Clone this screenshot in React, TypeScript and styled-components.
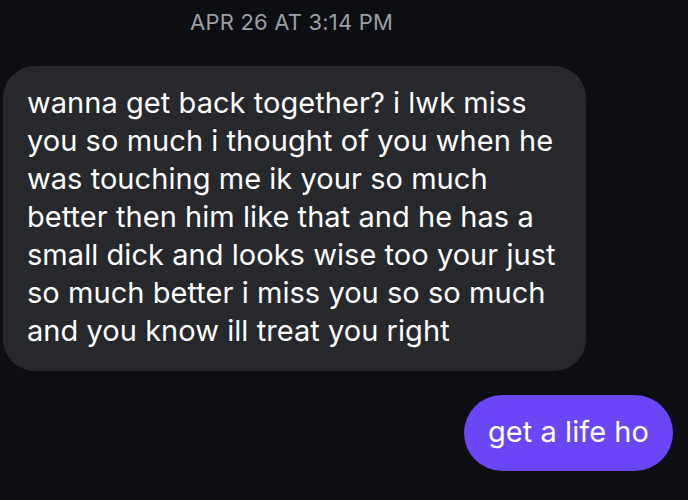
import React from "react";
import styled, { createGlobalStyle } from "styled-components";

const Global = createGlobalStyle`
  html, body { margin: 0; padding: 0; background: #0c0e12; }
  body { font-family: Inter, "Noto Sans", sans-serif; -webkit-font-smoothing: antialiased; }
`;

const Screen = styled.div`
  width: 688px;
  height: 500px;
  overflow: hidden;
  background: #0c0e12;
  display: flex;
  flex-direction: column;
  box-sizing: border-box;
  padding: 9px 15px 0 3px;
`;

const Timestamp = styled.div`
  color: #9a9ea6;
  font-size: 22px;
  letter-spacing: 0.2px;
  padding-left: 187px;
  line-height: 26px;
`;

const Row = styled.div<{ $mine?: boolean }>`
  display: flex;
  justify-content: ${(p) => (p.$mine ? "flex-end" : "flex-start")};
  margin-top: ${(p) => (p.$mine ? "24px" : "31px")};
`;

const Bubble = styled.div<{ $mine?: boolean }>`
  box-sizing: border-box;
  color: #ffffff;
  font-size: 29px;
  line-height: 38px;
  letter-spacing: 0.05px;
  white-space: nowrap;
  background: ${(p) => (p.$mine ? "#6a46f7" : "#26282c")};
  border-radius: ${(p) => (p.$mine ? "38px" : "32px")};
  padding: ${(p) => (p.$mine ? "18px 24px 20px 24px" : "18px 24px 21px 24px")};
  width: ${(p) => (p.$mine ? "auto" : "583px")};
`;

const lines = [
  "wanna get back together? i lwk miss",
  "you so much i thought of you when he",
  "was touching me ik your so much",
  "better then him like that and he has a",
  "small dick and looks wise too your just",
  "so much better i miss you so so much",
  "and you know ill treat you right",
];

export default function App() {
  return (
    <>
      <Global />
      <Screen>
        <Timestamp>APR 26 AT 3:14 PM</Timestamp>
        <Row>
          <Bubble>
            {lines.map((l, i) => (
              <React.Fragment key={i}>
                {l}
                {i < lines.length - 1 && <br />}
              </React.Fragment>
            ))}
          </Bubble>
        </Row>
        <Row $mine>
          <Bubble $mine>get a life ho</Bubble>
        </Row>
      </Screen>
    </>
  );
}
